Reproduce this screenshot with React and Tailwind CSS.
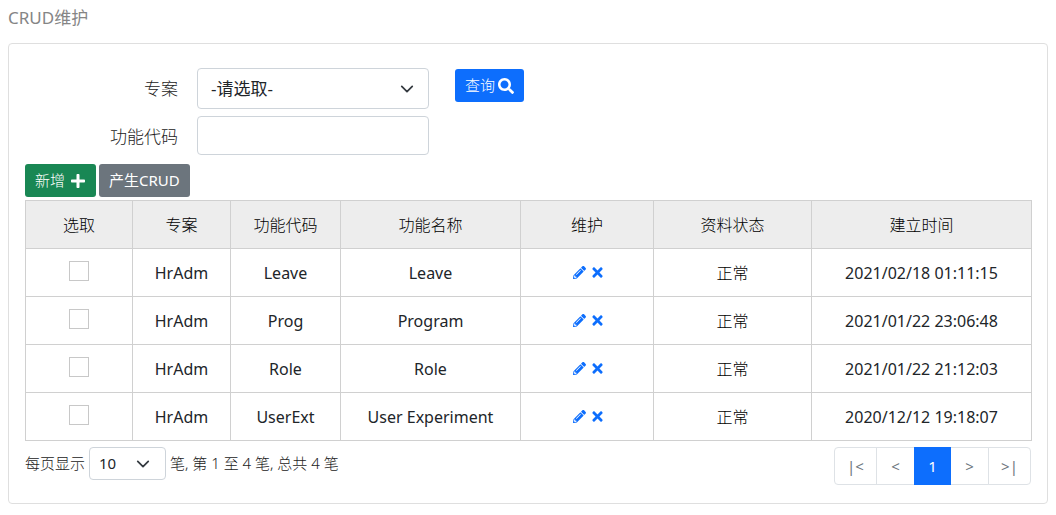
import { FaPencilAlt, FaPlus, FaSearch, FaTimes } from "react-icons/fa";

const columns = [
  { title: "选取", width: "w-[107px]" },
  { title: "专案", width: "w-[98px]" },
  { title: "功能代码", width: "w-[110px]" },
  { title: "功能名称", width: "w-[180px]" },
  { title: "维护", width: "w-[133px]" },
  { title: "资料状态", width: "w-[158px]" },
  { title: "建立时间", width: "w-[220px]" },
];

const rows = [
  { project: "HrAdm", code: "Leave", name: "Leave", status: "正常", created: "2021/02/18 01:11:15" },
  { project: "HrAdm", code: "Prog", name: "Program", status: "正常", created: "2021/01/22 23:06:48" },
  { project: "HrAdm", code: "Role", name: "Role", status: "正常", created: "2021/01/22 21:12:03" },
  { project: "HrAdm", code: "UserExt", name: "User Experiment", status: "正常", created: "2020/12/12 19:18:07" },
];

const pages = [
  { text: "|<", label: "第一页", width: "w-[43px]" },
  { text: "<", label: "上一页", width: "w-[39px]" },
  { text: "1", label: "第 1 页", width: "w-[37px]", current: true },
  { text: ">", label: "下一页", width: "w-[39px]" },
  { text: ">|", label: "最后一页", width: "w-[43px]" },
];

function Select({ id, label, option, className, arrow }) {
  return (
    <div className="relative">
      <select
        id={id}
        aria-label={label}
        className={`block appearance-none rounded border border-[#ced4da] bg-white text-[#212529] ${className}`}
      >
        <option>{option}</option>
      </select>
      <svg
        viewBox="0 0 16 16"
        className={`pointer-events-none absolute inset-y-0 my-auto size-[14px] ${arrow}`}
        fill="none"
        stroke="#343a40"
        strokeWidth="2"
        strokeLinecap="round"
        strokeLinejoin="round"
        aria-hidden="true"
      >
        <path d="M2 5l6 6 6-6" />
      </svg>
    </div>
  );
}

export default function App() {
  return (
    <main className="px-2 pt-1 font-['Noto_Sans','Noto_Sans_CJK_SC',sans-serif] font-light text-[#212529]">
      <h1 className="text-[17px] leading-7 font-normal text-[#858585]">CRUD维护</h1>

      <section className="mt-[11px] rounded border border-[#dfdfdf] bg-white px-4 pt-6 pb-[18px]">
        <form className="flex flex-col gap-[7px] text-[17px]" onSubmit={(e) => e.preventDefault()}>
          <div className="flex items-start">
            <label htmlFor="project" className="w-[172px] shrink-0 pr-[19px] text-right leading-[41px] text-[#222]">
              专案
            </label>
            <Select id="project" option="-请选取-" className="h-[41px] w-[232px] pr-9 pl-[13px] font-normal" arrow="right-[15px]" />
            <button
              type="submit"
              className="mt-px ml-[26px] flex h-[33px] items-center gap-[3px] rounded-[3px] bg-[#0d6efd] px-[10px] text-[15px] text-white"
            >
              查询
              <FaSearch className="size-4" />
            </button>
          </div>
          <div className="flex items-start">
            <label htmlFor="code" className="w-[172px] shrink-0 pr-[19px] text-right leading-[41px] text-[#222]">
              功能代码
            </label>
            <input id="code" type="text" className="h-[39px] w-[232px] rounded border border-[#ced4da] px-3" />
          </div>
        </form>

        <div className="mt-[7px] flex gap-[3px] text-[15px] text-white">
          <button type="button" className="flex h-[33px] items-center gap-[5px] rounded-[3px] bg-[#198754] px-[10px]">
            新增
            <FaPlus className="size-4" />
          </button>
          <button type="button" className="h-[33px] rounded-[3px] bg-[#6c757d] px-[10px] font-normal">
            产生CRUD
          </button>
        </div>

        <table className="mt-[3px] w-full table-fixed border-collapse text-center text-base">
          <thead>
            <tr className="h-12 bg-[#ededed] text-black">
              {columns.map((c) => (
                <th key={c.title} scope="col" className={`border border-[#d0d0d0] font-light ${c.width}`}>
                  {c.title}
                </th>
              ))}
            </tr>
          </thead>
          <tbody>
            {rows.map((r) => (
              <tr key={r.created} className="h-12">
                <td className="border border-[#d0d0d0]">
                  <input
                    type="checkbox"
                    aria-label={r.name}
                    className="mx-auto mb-1 block size-5 appearance-none border border-[#c8c8c8] bg-white checked:bg-[#0d6efd]"
                  />
                </td>
                <td className="border border-[#d0d0d0] font-normal">{r.project}</td>
                <td className="border border-[#d0d0d0] font-normal">{r.code}</td>
                <td className="border border-[#d0d0d0] font-normal">{r.name}</td>
                <td className="border border-[#d0d0d0]">
                  <div className="flex items-center justify-center gap-1 pl-1 text-[#0d6efd]">
                    <button type="button" aria-label="修改">
                      <FaPencilAlt className="size-[13px]" />
                    </button>
                    <button type="button" aria-label="删除">
                      <FaTimes className="size-[15px]" />
                    </button>
                  </div>
                </td>
                <td className="border border-[#d0d0d0] text-black">{r.status}</td>
                <td className="border border-[#d0d0d0] font-normal">{r.created}</td>
              </tr>
            ))}
          </tbody>
        </table>

        <footer className="mt-[6px] flex items-start justify-between">
          <div className="flex items-center gap-1 text-[15px] text-[#222]">
            <span>每页显示</span>
            <Select id="size" label="每页显示" option="10" className="h-[33px] w-[77px] pr-8 pl-[9px] font-normal" arrow="right-4" />
            <span>笔, 第 1 至 4 笔, 总共 4 笔</span>
          </div>
          <nav aria-label="分页" className="flex h-[38px] text-[15px] font-normal text-[#6c757d]">
            {pages.map((p) => (
              <a
                key={p.text}
                href="#"
                aria-label={p.label}
                aria-current={p.current ? "page" : undefined}
                className={`-ml-px flex items-center justify-center border first:rounded-l last:rounded-r ${p.width} ${
                  p.current ? "z-10 border-[#0d6efd] bg-[#0d6efd] text-white" : "border-[#dee2e6] bg-white"
                }`}
              >
                {p.text}
              </a>
            ))}
          </nav>
        </footer>
      </section>
    </main>
  );
}
